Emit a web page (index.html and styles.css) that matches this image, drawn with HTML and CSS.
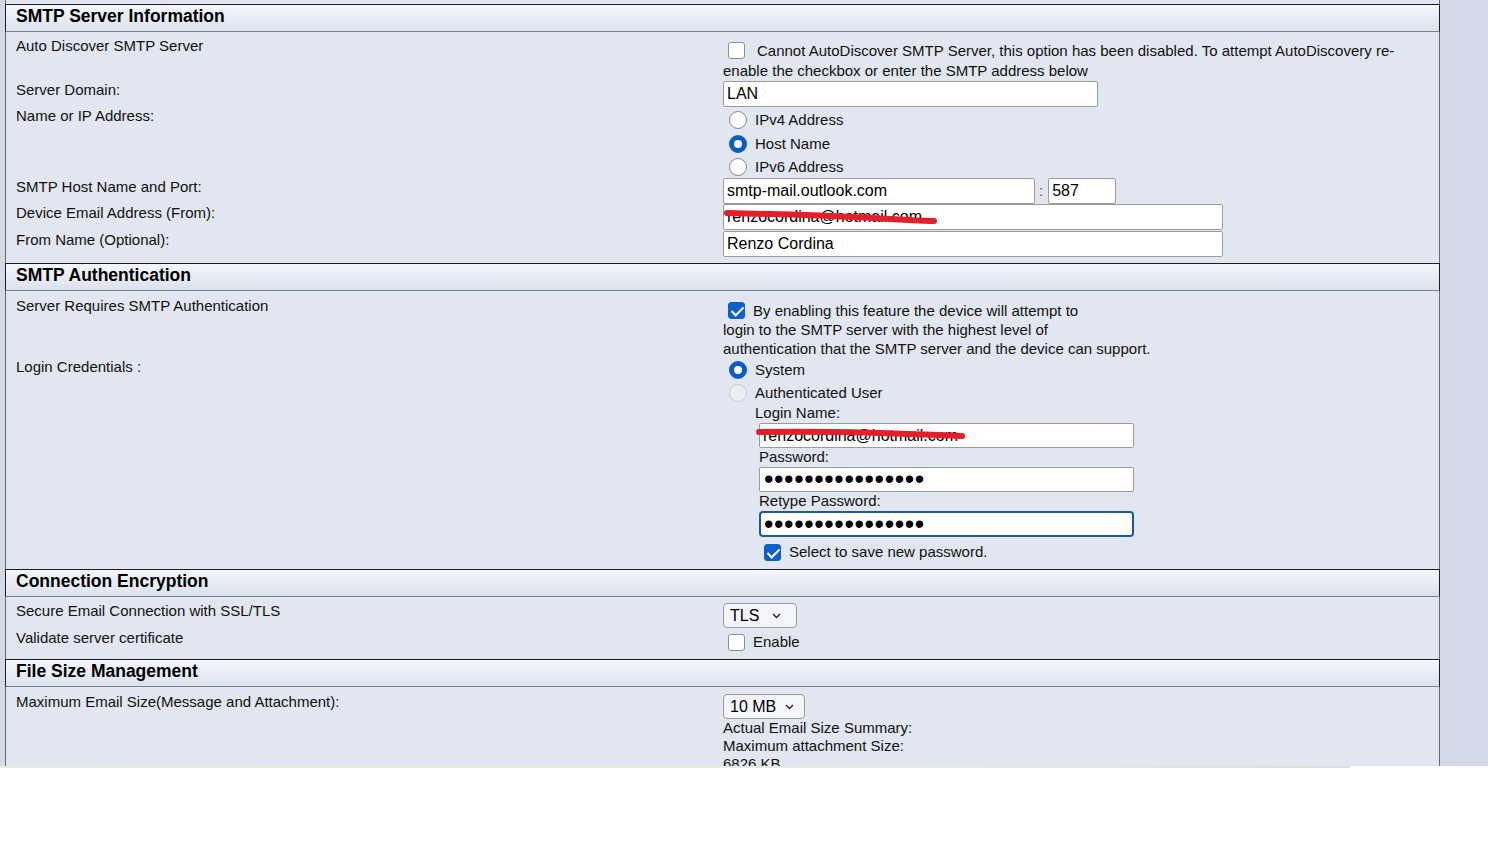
FILE: index.html
```html
<!DOCTYPE html>
<html lang="en">

<head>
  <meta charset="UTF-8" />
  <meta name="viewport" content="width=device-width, initial-scale=1.0" />
  <title>SMTP Settings</title>
  <link rel="stylesheet" href="styles.css">
</head>

<body>
  <div class="screen">
    <div class="panel">

      <!-- SMTP server -->
      <div class="section-head">SMTP Server Information</div>
      <div class="section-body s-server">
        <div class="row r-auto">
          <div class="label">Auto Discover SMTP Server</div>
          <div class="value note"><input type="checkbox" class="check c-wide"><span>Cannot AutoDiscover SMTP Server, this option has been disabled. To attempt AutoDiscovery re-<br>enable the checkbox or enter the SMTP address below</span></div>
        </div>
        <div class="row">
          <div class="label">Server Domain:</div>
          <div class="value"><input class="field w-375" type="text" value="LAN"></div>
        </div>
        <div class="row r-ip">
          <div class="label">Name or IP Address:</div>
          <div class="value">
            <label class="opt"><input type="radio" name="addr" class="radio"><span>IPv4 Address</span></label>
            <label class="opt o-23"><input type="radio" name="addr" class="radio" checked><span>Host Name</span></label>
            <label class="opt o-23"><input type="radio" name="addr" class="radio"><span>IPv6 Address</span></label>
          </div>
        </div>
        <div class="row">
          <div class="label">SMTP Host Name and Port:</div>
          <div class="value host">
            <input class="field w-312" type="text" value="smtp-mail.outlook.com">
            <span class="colon">:</span>
            <input class="field w-68" type="text" value="587">
          </div>
        </div>
        <div class="row r-gap1">
          <div class="label">Device Email Address (From):</div>
          <div class="value">
            <div class="masked">
              <input class="field w-500" type="text" value="renzocordina@hotmail.com">
              <svg class="scribble s-from" width="220" height="26" viewBox="0 0 220 26">
                <path d="M4 9 C 50 10, 110 12, 150 14 S 200 17, 211 17" stroke="#e3202a" stroke-width="6" stroke-linecap="round" fill="none" />
              </svg>
            </div>
          </div>
        </div>
        <div class="row">
          <div class="label">From Name (Optional):</div>
          <div class="value"><input class="field w-500" type="text" value="Renzo Cordina"></div>
        </div>
      </div>

      <!-- authentication -->
      <div class="section-head">SMTP Authentication</div>
      <div class="section-body s-auth">
        <div class="row r-req">
          <div class="label">Server Requires SMTP Authentication</div>
          <div class="value para"><input type="checkbox" class="check" checked><span>By enabling this feature the device will attempt to<br>login to the SMTP server with the highest level of<br>authentication that the SMTP server and the device can support.</span></div>
        </div>
        <div class="row r-login">
          <div class="label">Login Credentials :</div>
          <div class="value">
            <label class="opt"><input type="radio" name="cred" class="radio" checked><span>System</span></label>
            <label class="opt o-22"><input type="radio" name="cred" class="radio" disabled><span>Authenticated User</span></label>
            <div class="creds">
              <div class="cap first">Login Name:</div>
              <div class="masked">
                <input class="field w-375 short" type="text" value="renzocordina@hotmail.com">
                <svg class="scribble s-login" width="212" height="26" viewBox="0 0 212 26">
                  <path d="M3 9 C 60 8, 140 10, 206 13" stroke="#e3202a" stroke-width="6" stroke-linecap="round" fill="none" />
                </svg>
              </div>
              <div class="cap">Password:</div>
              <input class="field w-375 short pw" type="password" value="xxxxxxxxxxxxxxxx">
              <div class="cap">Retype Password:</div>
              <input class="field w-375 pw focus" type="password" value="xxxxxxxxxxxxxxxx">
              <label class="save"><input type="checkbox" class="check" checked><span>Select to save new password.</span></label>
            </div>
          </div>
        </div>
      </div>

      <!-- encryption -->
      <div class="section-head">Connection Encryption</div>
      <div class="section-body s-enc">
        <div class="row r-ssl">
          <div class="label">Secure Email Connection with SSL/TLS</div>
          <div class="value">
            <div class="select w-74"><span>TLS</span>
              <svg width="9" height="6" viewBox="0 0 9 6"><path d="M1 1l3.5 3.5L8 1" stroke="#222" stroke-width="1.4" fill="none" /></svg>
            </div>
          </div>
        </div>
        <div class="row r-cert">
          <div class="label">Validate server certificate</div>
          <div class="value"><label class="opt o-22"><input type="checkbox" class="check"><span>Enable</span></label></div>
        </div>
      </div>

      <!-- file size -->
      <div class="section-head">File Size Management</div>
      <div class="section-body s-size">
        <div class="row r-size">
          <div class="label">Maximum Email Size(Message and Attachment):</div>
          <div class="value">
            <div class="select w-82 tight"><span>10 MB</span>
              <svg width="9" height="6" viewBox="0 0 9 6"><path d="M1 1l3.5 3.5L8 1" stroke="#222" stroke-width="1.4" fill="none" /></svg>
            </div>
            <div class="summary">
              <div>Actual Email Size Summary:</div>
              <div>Maximum attachment Size:</div>
              <div>6826 KB</div>
            </div>
          </div>
        </div>
      </div>

    </div>
  </div>
  <div class="strip"></div>
</body>

</html>
```

FILE: styles.css
```css
* {
  box-sizing: border-box;
}

body {
  margin: 0;
  background: #fff;
  font-family: "Liberation Sans", Arial, sans-serif;
  font-size: 15px;
  color: #111;
}

.screen {
  height: 766px;
  overflow: hidden;
  background: #d3d9e6;
  padding-left: 5px;
}

.panel {
  width: 1435px;
  height: 100%;
  background: #e2e6f0;
  border-left: 1px solid #646a76;
  border-right: 1px solid #646a76;
  padding-top: 4px;
}

.section-head {
  height: 28px;
  margin: 0 -1px;
  border: 1px solid #1c1c1c;
  border-bottom-color: #7b808b;
  background: linear-gradient(#f5f7fc, #dbe1ee);
  padding-left: 10px;
  font-size: 17.5px;
  font-weight: bold;
  line-height: 22px;
  color: #000;
}

.s-server {
  padding-bottom: 6px;
}

.s-auth {
  padding-bottom: 5px;
}

.s-enc {
  padding-bottom: 6px;
}

.row {
  display: grid;
  grid-template-columns: 707px 1fr;
  padding-left: 10px;
}

.label {
  line-height: 17px;
}

.value {
  line-height: 20px;
}

/* text fields */
.field {
  display: block;
  height: 26px;
  border: 1px solid #9b9b9b;
  border-radius: 2px;
  background: #fff;
  font: 16px "Liberation Sans", Arial, sans-serif;
  color: #000;
  padding: 0 3px;
  margin: 0;
  outline: none;
}

.field.short {
  height: 25px;
}

.w-375 { width: 375px; }
.w-312 { width: 312px; }
.w-68 { width: 68px; }
.w-500 { width: 500px; }

.pw {
  font-size: 27px;
  letter-spacing: 0.6px;
  padding: 0 2px 0 4px;
}

.field.focus {
  height: 26px;
  border: 2px solid #1d57a8;
  border-radius: 4px;
  padding: 0 2px 0 3px;
}

.masked {
  position: relative;
  width: max-content;
}

.scribble {
  position: absolute;
  top: 0;
  left: 0;
  pointer-events: none;
}

.s-login {
  left: -3px;
}

/* checkbox / radio */
.check {
  appearance: none;
  width: 17px;
  height: 17px;
  margin: 0 8px 0 5px;
  border: 1px solid #8d8d8d;
  border-radius: 3px;
  background: #fff;
  vertical-align: -3px;
  position: relative;
  flex: none;
}

.check.c-wide {
  margin-right: 12px;
}

.check:checked {
  background: #0c5fcd;
  border-color: #0c5fcd;
}

.check:checked::after {
  content: "";
  position: absolute;
  left: 5px;
  top: 1px;
  width: 5px;
  height: 10px;
  border: solid #fff;
  border-width: 0 2px 2px 0;
  transform: rotate(45deg);
}

.radio {
  appearance: none;
  width: 18px;
  height: 18px;
  margin: 0 8px 0 6px;
  border: 1px solid #8a8a8a;
  border-radius: 50%;
  background: #fff;
  flex: none;
}

.radio:checked {
  border: 5px solid #0b5cc6;
}

.radio:disabled {
  border-color: #c9ccd3;
  background: #eceef3;
}

.opt {
  display: flex;
  align-items: center;
  height: 24px;
}

.opt.o-23 { height: 23px; }
.opt.o-22 { height: 22px; }

/* server rows */
.r-auto .label {
  padding-top: 5px;
}

.r-auto .value {
  padding-top: 9px;
}

.r-ip .value {
  padding-top: 1px;
}

.r-gap1 { margin-bottom: 1px; }

.host {
  display: flex;
  align-items: center;
}

.colon {
  margin: 0 5px 0 4px;
  color: #555;
  line-height: 26px;
}

/* auth rows */
.r-req .label {
  padding-top: 6px;
}

.para {
  padding-top: 10px;
  line-height: 19px;
}

.creds {
  padding-left: 36px;
}

.cap {
  line-height: 18px;
  margin-bottom: 1px;
}

.cap.first {
  margin-left: -4px;
}

.save {
  display: flex;
  align-items: center;
  height: 24px;
  margin-top: 3px;
}

/* encryption rows */
.r-ssl .label {
  padding-top: 5px;
}

.r-ssl .value {
  padding-top: 6px;
}

.r-cert .label {
  padding-top: 1px;
}

.r-cert .value {
  padding-top: 3px;
}

.select {
  display: flex;
  align-items: center;
  justify-content: space-between;
  height: 25px;
  border: 1px solid #9b9b9b;
  border-radius: 4px;
  background: #f4f5f8;
  font-size: 16px;
  color: #000;
  padding: 0 15px 0 6px;
}

.select.tight {
  padding-right: 10px;
}

.w-74 { width: 74px; }
.w-82 { width: 82px; }

/* size row */
.r-size .label {
  padding-top: 6px;
}

.r-size .value {
  padding-top: 7px;
}

.summary {
  line-height: 18px;
}

.strip {
  width: 1350px;
  height: 2px;
  background: linear-gradient(90deg, #e1eee2, #eceadb 40%, #e4ede3 70%, #dcdcdc);
}
```
